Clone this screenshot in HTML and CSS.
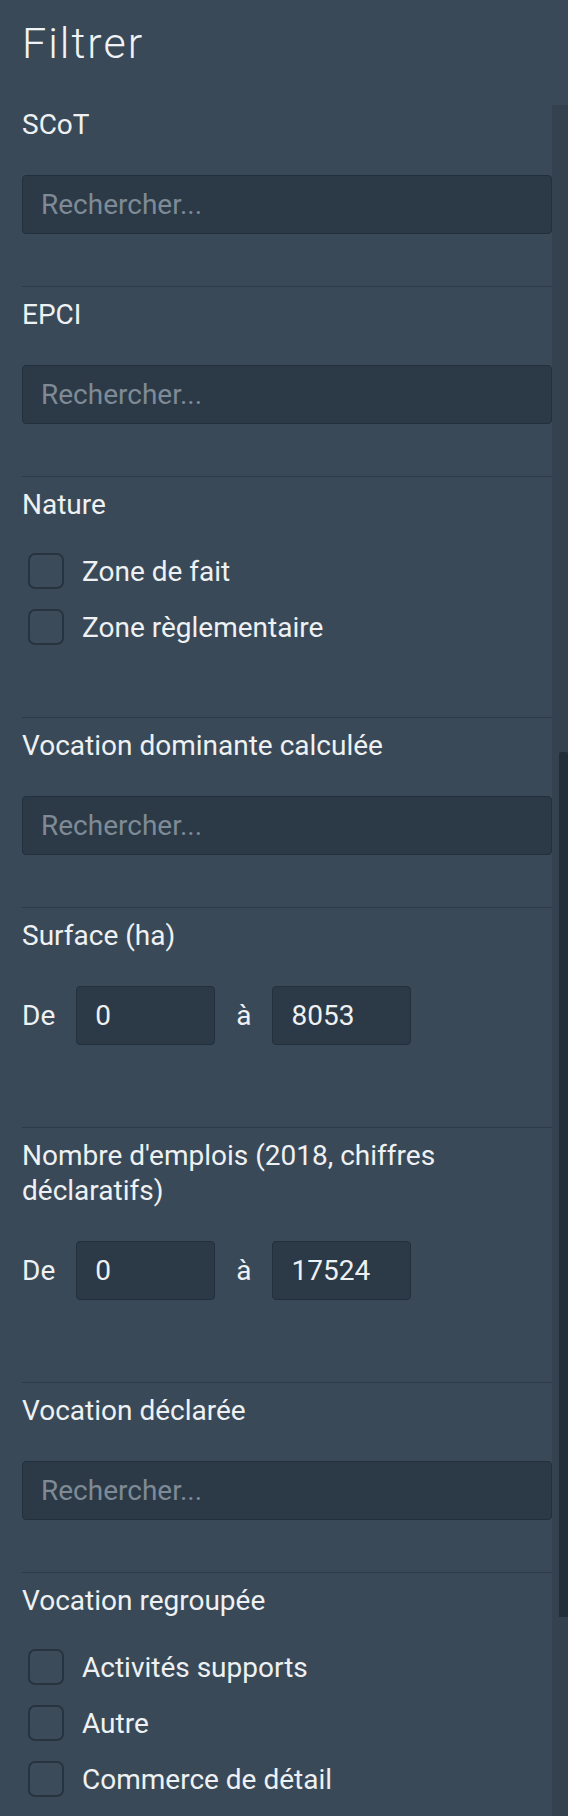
FILE: index.html
```html
<html>
<head>
	<title>Filtrer</title>
	<link rel="stylesheet" href="styles.css">
</head>
<body>
	<div id='page'>
		<div id='panel'>
			<h1 class='title'>Filtrer</h1>

			<div class='section first'>
				<div class='label'>SCoT</div>
				<input class='search' type='text' placeholder='Rechercher...'>
			</div>

			<div class='section'>
				<div class='label'>EPCI</div>
				<input class='search' type='text' placeholder='Rechercher...'>
			</div>

			<div class='section'>
				<div class='label'>Nature</div>
				<div class='checks'>
					<label class='check'><input type='checkbox'><span>Zone de fait</span></label>
					<label class='check'><input type='checkbox'><span>Zone règlementaire</span></label>
				</div>
			</div>

			<div class='section'>
				<div class='label'>Vocation dominante calculée</div>
				<input class='search' type='text' placeholder='Rechercher...'>
			</div>

			<div class='section'>
				<div class='label'>Surface (ha)</div>
				<div class='range'>
					<span>De</span>
					<input class='num' type='text' value='0'>
					<span>à</span>
					<input class='num' type='text' value='8053'>
				</div>
			</div>

			<div class='section'>
				<div class='label'>Nombre d'emplois (2018, chiffres déclaratifs)</div>
				<div class='range'>
					<span>De</span>
					<input class='num' type='text' value='0'>
					<span>à</span>
					<input class='num' type='text' value='17524'>
				</div>
			</div>

			<div class='section'>
				<div class='label'>Vocation déclarée</div>
				<input class='search' type='text' placeholder='Rechercher...'>
			</div>

			<div class='section'>
				<div class='label'>Vocation regroupée</div>
				<div class='checks'>
					<label class='check'><input type='checkbox'><span>Activités supports</span></label>
					<label class='check'><input type='checkbox'><span>Autre</span></label>
					<label class='check'><input type='checkbox'><span>Commerce de détail</span></label>
				</div>
			</div>
		</div>

		<div id='track'>
			<div id='thumb'></div>
		</div>
	</div>
</body>
</html>
```

FILE: styles.css
```css
body{
	margin:0;
	background-color:#3a4957;
	color:#eef1f3;
	font-family: Roboto, "Liberation Sans", sans-serif;
	font-size:28px;
	overflow:hidden;
}
#page{
	display:flex;
	height:1816px;
}
#panel{
	flex:1;
	padding:18px 0 0 22px;
	min-width:0;
}
.title{
	margin:0 0 39px;
	font-size:43px;
	line-height:50px;
	font-weight:300;
	letter-spacing:2px;
	color:#f0f3f5;
}
.section{
	border-top:1px solid #2e3b47;
	padding:10px 0 52px;
}
.section.first{
	border-top:none;
	padding-top:0;
}
.label{
	line-height:35px;
}
.search, .num{
	display:block;
	box-sizing:border-box;
	height:59px;
	margin-top:33px;
	padding:0 18px;
	background-color:#2c3947;
	border:1px solid #232f3b;
	border-radius:4px;
	color:#eef1f3;
	font-family: Roboto, "Liberation Sans", sans-serif;
	font-size:28px;
	outline:none;
}
.search{
	width:100%;
}
.search::placeholder{
	color:#7e8b96;
}
.range{
	display:flex;
	align-items:center;
	gap:21px;
	margin:33px 0 30px;
}
.range .num{
	width:139px;
	margin-top:0;
}
.checks{
	margin:21px 0 10px;
}
.check{
	display:flex;
	align-items:center;
	height:56px;
	line-height:35px;
	padding-left:6px;
}
.check input{
	appearance:none;
	-webkit-appearance:none;
	box-sizing:border-box;
	width:36px;
	height:36px;
	margin:0 18px 0 0;
	background-color:#3c4b59;
	border:2px solid #27333e;
	border-radius:7px;
}
#track{
	width:16px;
	margin-top:105px;
	background-color:#34424f;
}
#thumb{
	margin:647px 0 0 7px;
	height:865px;
	background-color:#222e38;
	border-radius:2px 2px 0 0;
}
```
